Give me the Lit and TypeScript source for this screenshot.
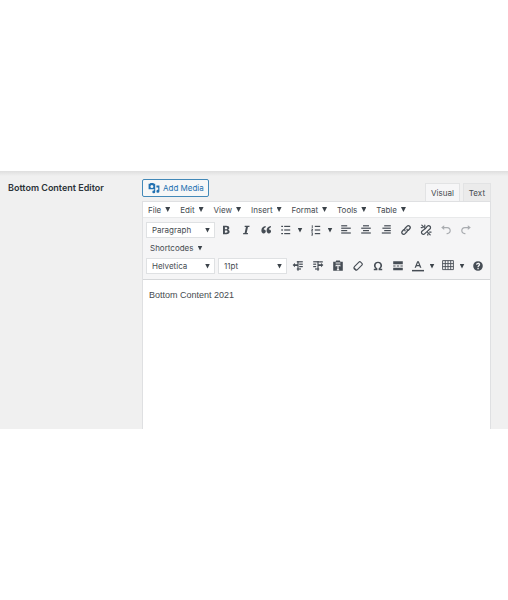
import { LitElement, html, css, svg, nothing } from "lit";
import { customElement, property, state } from "lit/decorators.js";

const lines = (rows: number[][]) =>
  rows.map(([x, y, w]) => svg`<rect x=${x} y=${y} width=${w} height="2"/>`);

const icons: Record<string, unknown> = {
  bold: svg`<path d="M5 3v14h5.500c3.500 0 5.500-1.500 5.500-4.200 0-1.800-1-3-2.700-3.300 1.400-.5 2.200-1.500 2.200-2.900C15.500 4.200 13.700 3 10.400 3zm3.200 2.300h1.900c1.300 0 2 .5 2 1.600s-.7 1.700-2 1.700H8.200zm0 5.500h2.100c1.500 0 2.200.6 2.200 1.900s-.8 2-2.200 2H8.200z"/>`,
  italic: svg`<path d="M8 3h8l-.4 2h-2.300l-2.200 10h2.300l-.4 2H5l.4-2h2.300L9.900 5H7.600z"/>`,
  quote: svg`<path d="M9.500 3.500v1.800C7.300 6 6.300 7.300 6.200 9c1.900-.3 3.500 1.100 3.500 3.200 0 2.100-1.400 3.500-3.500 3.500-2.500 0-3.900-1.800-3.900-4.800 0-4 2.500-6.900 7.200-7.400zm8.700 0v1.800C16 6 15 7.300 14.900 9c1.900-.3 3.500 1.100 3.500 3.200 0 2.100-1.400 3.500-3.500 3.500-2.500 0-3.900-1.800-3.900-4.800 0-4 2.500-6.900 7.200-7.400z"/>`,
  bullets: lines([[2, 3, 3], [7, 3, 10], [2, 9, 3], [7, 9, 10], [2, 15, 3], [7, 15, 10]]),
  numbers: svg`${lines([[8, 3, 9], [8, 9, 9], [8, 15, 9]])}<path d="M3 2h1.500v4.500H3zM2 8h3v2.500l-1.500 1H5v1H2v-1.500l1.700-1.500V9H2zM2 14h3v5H2v-1h2v-1H2.500v-1H4v-1H2z"/>`,
  left: lines([[2, 2, 10], [2, 6, 16], [2, 10, 10], [2, 14, 16]]),
  center: lines([[5, 2, 10], [2, 6, 16], [5, 10, 10], [2, 14, 16]]),
  right: lines([[7, 2, 11], [4, 6, 14], [7, 10, 11], [3, 14, 15]]),
  link: svg`<g fill="none" stroke="currentColor" stroke-width="2.200" stroke-linecap="round"><path d="M8.500 11.500c-1.500-1.500-1.300-3.200 0-4.500l3-3c1.500-1.500 3.300-1.500 4.600-.2s1.300 3.100-.2 4.600l-2 2"/><path d="M11.500 8.500c1.500 1.500 1.300 3.200 0 4.500l-3 3c-1.500 1.500-3.300 1.500-4.600.2s-1.300-3.100.2-4.600l2-2"/></g>`,
  unlink: svg`<g fill="none" stroke="currentColor" stroke-width="2" stroke-linecap="round"><path d="M9 7.500l3-3.500c1.500-1.500 3.300-1.500 4.600-.2s1.300 3.100-.2 4.600L13 11.500l-5 4.500c-1.500 1.500-3.300 1.500-4.600.2s-1.300-3.100.2-4.600L8 8.500M3 2l5 5M8 2v2M2 6h2M12 13l5 5M13 17v1.500M16 13.500h2.500"/></g>`,
  undo: svg`<path d="M7 2v3h5c3.800 0 6 2.500 6 6s-2.200 6-6 6h-1v-2h1c2.500 0 4-1.500 4-4s-1.500-4-4-4H7v3L2 6z"/>`,
  redo: svg`<path d="M13 2v3H8c-3.800 0-6 2.500-6 6s2.200 6 6 6h1v-2H8c-2.500 0-4-1.500-4-4s1.500-4 4-4h5v3l5-4z"/>`,
  outdent: svg`${lines([[8, 2, 10], [12, 6, 6], [12, 10, 6], [8, 14, 7]])}<path d="M5 5v2h4v3H5v2L1 8.500zM9 2h2v16H9z"/>`,
  indent: svg`${lines([[2, 2, 10], [2, 6, 5], [2, 10, 5], [5, 14, 7]])}<path d="M15 5v2h-4v3h4v2l4-3.500zM9 2h2v16H9zM12 2h6v2h-6z"/>`,
  paste: svg`<path fill-rule="evenodd" d="M2 3h4l1-2h6l1 2h4v15H2zm4 1v2h8V4zM6 8v3h1l1-1.500h1V15l-1 1v1h4v-1l-1-1V9.500h1l1 1.500h1V8z"/>`,
  eraser: svg`<path fill="none" stroke="currentColor" stroke-width="1.800" stroke-linejoin="round" d="M11.500 3.500c1-1 2-1 3 0l2 2c1 1 1 2 0 3L9 16c-1 1-2 1-3 0l-2-2c-1-1-1-2 0-3z"/><path d="M3 12l5.500 5-2 1-4-3z"/>`,
  omega: svg`<path d="M10 3c4 0 6.800 2.500 6.800 6.200 0 2.300-1.200 4.200-3.300 5.500H17V17h-6v-3c2-.9 3-2.500 3-4.700C14 6.700 12.500 5 10 5S6 6.700 6 9.300c0 2.200 1 3.800 3 4.700v3H3v-2.300h3.500C4.400 13.400 3.200 11.500 3.200 9.200 3.200 5.500 6 3 10 3z"/>`,
  more: svg`<path d="M2 2h16v5H2zM2 9h4v2H2zM8 9h4v2H8zM14 9h4v2h-4zM2 13h16v4H2z"/>`,
  color: svg`<path d="M8.700 2h2.600l4.400 11h-2.400l-1-2.700H7.600l-1 2.700H4.300zM10 4.300L8.300 8.500h3.400z"/><path d="M0 16.500h20V19H0z"/>`,
  table: svg`<path fill="none" stroke="currentColor" stroke-width="1.500" d="M1 1h18v15H1zM1 6h18M1 11h18M5.500 1v15M10 1v15M14.500 1v15"/>`,
  help: svg`<path fill-rule="evenodd" d="M10 2a8 8 0 1 1 0 16 8 8 0 0 1 0-16zM6.800 8h2.100c0-.9.500-1.500 1.300-1.500.7 0 1.100.4 1.100 1 0 1.400-2.300 1.600-2.300 4.500h2.100c0-1.900 2.500-2.300 2.500-4.700 0-1.600-1.300-2.700-3.300-2.700-2.200 0-3.500 1.300-3.500 3.400zM9 13.200v2.200h2.200v-2.200z"/>`,
  media: svg`<path fill-rule="evenodd" d="M1 3h2l1-1.500h5L10 3h2v9H1zm5.500 1.800a2.500 2.500 0 1 0 0 5 2.500 2.500 0 0 0 0-5z"/><path d="M14 6h5v9.500a2.500 2.500 0 1 1-2-2.400V9h-3zM10 12h2v4.500a2.400 2.400 0 1 1-2-2.400z"/>`,
};

const icon = (name: string) =>
  html`<svg viewBox="0 0 20 20" aria-hidden="true">${icons[name]}</svg>`;

const shared = css`
  * { box-sizing: border-box; }
  button, select, textarea {
    font: inherit;
    color: inherit;
    margin: 0;
    padding: 0;
    border: 0;
    background: none;
    border-radius: 0;
  }
  svg { display: block; fill: currentColor; }
  .caret {
    width: 5px;
    height: 5px;
    background: #3c434a;
    clip-path: polygon(0 0, 100% 0, 50% 100%);
  }
`;

@customElement("tool-button")
class ToolButton extends LitElement {
  @property() icon = "";
  @property() label = "";
  @property({ type: Boolean }) menu = false;
  @property({ type: Boolean }) disabled = false;

  static styles = [
    shared,
    css`
      :host { display: block; flex: none; }
      .tool { display: flex; align-items: center; height: 16px; color: #464d55; }
      .tool:disabled { color: #a9acb0; }
      .face { width: 18px; display: flex; justify-content: center; }
      .face svg { width: 12px; height: 12px; }
      .drop { width: 10px; display: flex; justify-content: center; }
    `,
  ];

  render() {
    return html`<button class="tool" aria-label=${this.label} ?disabled=${this.disabled}>
      <span class="face">${icon(this.icon)}</span>
      ${this.menu ? html`<span class="drop"><span class="caret"></span></span>` : nothing}
    </button>`;
  }
}

@customElement("tool-select")
class ToolSelect extends LitElement {
  @property() label = "";
  @property({ type: Array }) options: string[] = [];

  static styles = [
    shared,
    css`
      :host { display: block; flex: none; }
      .box {
        display: grid;
        align-items: center;
        width: 69px;
        height: 16px;
        background: #fff;
        border: 1px solid #dfe1e3;
      }
      .list {
        grid-area: 1 / 1;
        width: 100%;
        height: 14px;
        padding: 0 12px 0 5px;
        appearance: none;
      }
      .caret { grid-area: 1 / 1; justify-self: end; margin-right: 4px; pointer-events: none; }
    `,
  ];

  render() {
    return html`<div class="box">
      <select class="list" aria-label=${this.label}>
        ${this.options.map((o) => html`<option>${o}</option>`)}
      </select>
      <span class="caret"></span>
    </div>`;
  }
}

@customElement("app-root")
class AppRoot extends LitElement {
  @state() private tab = "Visual";

  static styles = [
    shared,
    css`
      :host {
        display: block;
        padding: 171px 0;
        background: #fff;
        color: #464b50;
        font: 8px/12px Inter, "Liberation Sans", sans-serif;
      }
      .panel {
        display: grid;
        grid-template-columns: 134px 1fr;
        padding: 8px 18px 0 8px;
        background: linear-gradient(#dedede, #f0f0f0 5px);
      }
      .title { padding-top: 3px; font-size: 9px; font-weight: 600; color: #2c3338; }
      .head { display: flex; justify-content: space-between; }
      .media {
        display: flex;
        align-items: center;
        gap: 3px;
        height: 18px;
        padding: 0 4px 0 5px;
        border: 1px solid #4389b8;
        border-radius: 2px;
        background: #f6f7f7;
        color: #2271b1;
      }
      .media svg { width: 12px; height: 12px; }
      .tabs { display: flex; gap: 3px; padding-top: 4px; }
      .tab {
        height: 18px;
        padding: 0 5px;
        border: 1px solid #e2e3e4;
        border-bottom: 0;
        background: #ebebeb;
      }
      .tab.active { background: #f6f6f7; }
      .frame { border: 1px solid #dfe0e2; border-bottom: 0; background: #f5f5f6; }
      .menus {
        display: flex;
        gap: 10px;
        height: 15px;
        padding: 0 5px;
        background: #fff;
      }
      .menu { display: flex; align-items: center; gap: 4px; }
      .tools {
        display: grid;
        gap: 2px;
        padding: 4px 3px 5px;
        border-top: 1px solid #e8e9ea;
        border-bottom: 1px solid #d5d7d9;
      }
      .row { display: flex; align-items: center; gap: 2px; min-height: 16px; }
      .row .menu { padding-left: 4px; }
      .pair { display: flex; gap: 3px; }
      .body {
        display: block;
        width: 100%;
        height: 149px;
        padding: 9px 6px;
        background: #fff;
        font: 9px/12px "Liberation Sans", sans-serif;
        resize: none;
      }
    `,
  ];

  private menu(name: string) {
    return html`<button class="menu">${name}<span class="caret"></span></button>`;
  }

  private tool(name: string, label: string, menu = false, disabled = false) {
    return html`<tool-button .icon=${name} .label=${label} .menu=${menu} .disabled=${disabled}></tool-button>`;
  }

  render() {
    return html`<main class="panel">
      <label class="title" for="content">Bottom Content Editor</label>
      <section>
        <div class="head">
          <button class="media">${icon("media")}Add Media</button>
          <div class="tabs">
            ${["Visual", "Text"].map(
              (t) => html`<button class="tab ${t === this.tab ? "active" : ""}" @click=${() => (this.tab = t)}>${t}</button>`,
            )}
          </div>
        </div>
        <div class="frame">
          <div class="menus">
            ${["File", "Edit", "View", "Insert", "Format", "Tools", "Table"].map((m) => this.menu(m))}
          </div>
          <div class="tools">
            <div class="row">
              <tool-select label="Block format" .options=${["Paragraph"]}></tool-select>
              ${this.tool("bold", "Bold")} ${this.tool("italic", "Italic")}
              ${this.tool("quote", "Blockquote")} ${this.tool("bullets", "Bulleted list", true)}
              ${this.tool("numbers", "Numbered list", true)} ${this.tool("left", "Align left")}
              ${this.tool("center", "Align center")} ${this.tool("right", "Align right")}
              ${this.tool("link", "Insert link")} ${this.tool("unlink", "Remove link")}
              ${this.tool("undo", "Undo", false, true)} ${this.tool("redo", "Redo", false, true)}
            </div>
            <div class="row">${this.menu("Shortcodes")}</div>
            <div class="row">
              <div class="pair">
                <tool-select label="Font family" .options=${["Helvetica"]}></tool-select>
                <tool-select label="Font size" .options=${["11pt"]}></tool-select>
              </div>
              ${this.tool("outdent", "Decrease indent")} ${this.tool("indent", "Increase indent")}
              ${this.tool("paste", "Paste as text")} ${this.tool("eraser", "Clear formatting")}
              ${this.tool("omega", "Special character")} ${this.tool("more", "Read more")}
              ${this.tool("color", "Text color", true)} ${this.tool("table", "Table", true)}
              ${this.tool("help", "Help")}
            </div>
          </div>
          <textarea class="body" id="content" .value=${"Bottom Content 2021"}></textarea>
        </div>
      </section>
    </main>`;
  }
}
